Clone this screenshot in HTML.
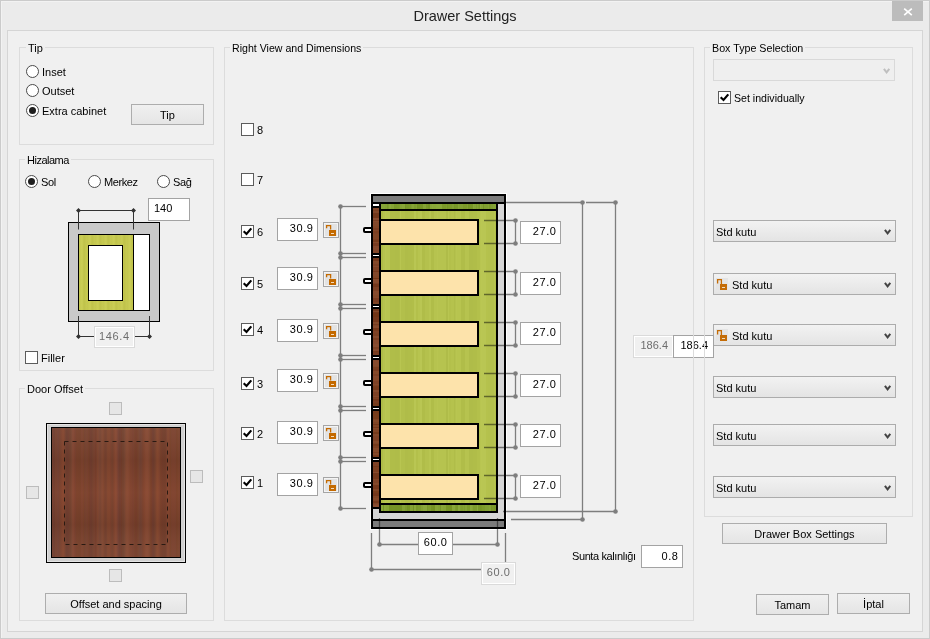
<!DOCTYPE html><html><head><meta charset="utf-8"><style>
html,body{margin:0;padding:0;}
body{width:930px;height:639px;position:relative;overflow:hidden;background:#ebebeb;font-family:"Liberation Sans",sans-serif;color:#000;}
div,svg{position:absolute;box-sizing:border-box;}
.t{white-space:nowrap;}
</style></head><body>
<div style="left:0px;top:0px;width:930px;height:639px;border:1px solid #cbcbcb;"></div>
<div style="left:1px;top:1px;width:928px;height:637px;border:1px solid #f2f2f2;border-right:none;border-bottom:none;"></div>
<div class="t" style="left:265px;width:400px;text-align:center;top:9px;font-size:14.5px;line-height:14.5px;color:#222;">Drawer Settings</div>
<div style="left:892px;top:1px;width:31px;height:20px;background:#bcbcbc;"></div>
<svg style="left:903px;top:7px" width="10" height="10" viewBox="0 0 10 10"><path d="M1.2 1.7 L8.8 8.1 M8.8 1.7 L1.2 8.1" stroke="#fff" stroke-width="1.7"/></svg>
<div style="left:7px;top:30px;width:916px;height:602px;border:1px solid #d5d5d5;background:#f0f0f0;"></div>
<div style="left:19px;top:47px;width:195px;height:98px;border:1px solid #dcdcdc;"></div>
<div class="t" style="left:26px;top:41px;height:14px;padding:0 2px;background:#f0f0f0;font-size:11px;line-height:14px;">Tip</div>
<div style="left:19px;top:159px;width:195px;height:212px;border:1px solid #dcdcdc;"></div>
<div class="t" style="left:25px;top:153px;height:14px;padding:0 2px;background:#f0f0f0;font-size:11px;line-height:14px;"><span style="letter-spacing:-0.5px">Hizalama</span></div>
<div style="left:19px;top:388px;width:195px;height:233px;border:1px solid #dcdcdc;"></div>
<div class="t" style="left:25px;top:382px;height:14px;padding:0 2px;background:#f0f0f0;font-size:11px;line-height:14px;">Door Offset</div>
<div style="left:224px;top:47px;width:470px;height:574px;border:1px solid #dcdcdc;"></div>
<div class="t" style="left:230px;top:41px;height:14px;padding:0 2px;background:#f0f0f0;font-size:10.6px;line-height:14px;">Right View and Dimensions</div>
<div style="left:704px;top:47px;width:209px;height:470px;border:1px solid #dcdcdc;"></div>
<div class="t" style="left:710px;top:41px;height:14px;padding:0 2px;background:#f0f0f0;font-size:10.7px;line-height:14px;">Box Type Selection</div>
<div style="left:26px;top:65px;width:13px;height:13px;border:1px solid #4a4a4a;border-radius:50%;background:#fff;"></div>
<div class="t" style="left:42px;top:67px;font-size:11px;line-height:11px;">Inset</div>
<div style="left:26px;top:84px;width:13px;height:13px;border:1px solid #4a4a4a;border-radius:50%;background:#fff;"></div>
<div class="t" style="left:42px;top:86px;font-size:11px;line-height:11px;">Outset</div>
<div style="left:26px;top:104px;width:13px;height:13px;border:1px solid #4a4a4a;border-radius:50%;background:#fff;"></div>
<div style="left:29px;top:107px;width:7px;height:7px;border-radius:50%;background:#1e1e1e;"></div>
<div class="t" style="left:42px;top:106px;font-size:11px;line-height:11px;">Extra cabinet</div>
<div style="left:131px;top:104px;width:73px;height:21px;border:1px solid #adadad;background:linear-gradient(#f0f0f0,#e5e5e5);"></div>
<div class="t" style="left:-32.5px;width:400px;text-align:center;top:110px;font-size:11px;line-height:11px;">Tip</div>
<div style="left:25px;top:175px;width:13px;height:13px;border:1px solid #4a4a4a;border-radius:50%;background:#fff;"></div>
<div style="left:28px;top:178px;width:7px;height:7px;border-radius:50%;background:#1e1e1e;"></div>
<div class="t" style="left:41px;top:177px;font-size:11px;line-height:11px;letter-spacing:-0.4px;">Sol</div>
<div style="left:88px;top:175px;width:13px;height:13px;border:1px solid #4a4a4a;border-radius:50%;background:#fff;"></div>
<div class="t" style="left:104px;top:177px;font-size:11px;line-height:11px;letter-spacing:-0.4px;">Merkez</div>
<div style="left:157px;top:175px;width:13px;height:13px;border:1px solid #4a4a4a;border-radius:50%;background:#fff;"></div>
<div class="t" style="left:173px;top:177px;font-size:11px;line-height:11px;letter-spacing:-0.4px;">Sağ</div>
<div style="left:68px;top:222px;width:92px;height:100px;border:1px solid #000;background:#c9c9c9;"></div>
<div style="left:78px;top:234px;width:72px;height:77px;border:1px solid #000;background:#fff;"></div>
<div style="left:79px;top:235px;width:54px;height:75px;background:repeating-linear-gradient(90deg,#c3c64e 0px,#cbce56 3px,#bfc24a 5px,#c7ca52 8px);"></div>
<div style="left:133px;top:235px;width:1px;height:75px;background:#000;"></div>
<div style="left:88px;top:245px;width:35px;height:56px;border:1px solid #000;background:#fff;"></div>
<svg style="left:60px;top:195px" width="110" height="150" viewBox="60 195 110 150"><path d="M78.5 210.5 H133.5 M78.5 210.5 V229.5 M133.5 210.5 V229.5 M78.5 336.5 H149.5 M78.5 316 V336.5 M149.5 316 V336.5" stroke="#333" stroke-width="1" fill="none"/><path d="M78.5 208 L81 210.5 L78.5 213 L76 210.5Z M133.5 208 L136 210.5 L133.5 213 L131 210.5Z M78.5 334 L81 336.5 L78.5 339 L76 336.5Z M149.5 334 L152 336.5 L149.5 339 L147 336.5Z" fill="#333"/></svg>
<div style="left:148px;top:198px;width:42px;height:23px;border:1px solid #a3a3a3;background:#fff;"></div>
<div class="t" style="left:154px;top:203px;font-size:11px;line-height:11px;">140</div>
<div style="left:94px;top:326px;width:41px;height:22px;border:1px solid #dadada;box-shadow:inset 0 0 0 1px #fff;background:#f0f0f0;"></div>
<div class="t" style="left:-170.4px;width:300px;text-align:right;top:331px;font-size:11px;line-height:11px;color:#6d6d6d;letter-spacing:0.6px;">146.4</div>
<div style="left:25px;top:351px;width:13px;height:13px;border:1px solid #5c5c5c;background:#fff;"></div>
<div class="t" style="left:41px;top:353px;font-size:11px;line-height:11px;">Filler</div>
<div style="left:46px;top:423px;width:140px;height:140px;border:1px solid #000;background:#d0d0d0;box-shadow:inset 0 0 0 1px #e4e4e4;"></div>
<svg style="left:51px;top:427px" width="130" height="131" viewBox="0 0 130 131"><rect x="0.5" y="0.5" width="129" height="130" fill="#7a422e" stroke="#000"/><defs><filter id="wb" x="0" y="0" width="1" height="1"><feGaussianBlur stdDeviation="0.8 0"/></filter><clipPath id="wc"><rect x="1" y="1" width="128" height="129"/></clipPath></defs><g clip-path="url(#wc)"><g transform="translate(1,1)" filter="url(#wb)"><rect x="0" y="0" width="1" height="130" fill="#773f2c"/><rect x="1" y="0" width="2" height="130" fill="#6c3e30"/><rect x="3" y="0" width="1" height="130" fill="#6f3a29"/><rect x="4" y="0" width="1" height="130" fill="#864830"/><rect x="5" y="0" width="2" height="130" fill="#6c3e30"/><rect x="7" y="0" width="2" height="130" fill="#7b422d"/><rect x="9" y="0" width="1" height="130" fill="#733c2a"/><rect x="10" y="0" width="2" height="130" fill="#8a4a31"/><rect x="12" y="0" width="1" height="130" fill="#7b422d"/><rect x="13" y="0" width="1" height="130" fill="#6f3a29"/><rect x="14" y="0" width="2" height="130" fill="#6c3e30"/><rect x="16" y="0" width="2" height="130" fill="#733c2a"/><rect x="18" y="0" width="1" height="130" fill="#704232"/><rect x="19" y="0" width="1" height="130" fill="#704232"/><rect x="20" y="0" width="2" height="130" fill="#8a4a31"/><rect x="22" y="0" width="1" height="130" fill="#7b422d"/><rect x="23" y="0" width="1" height="130" fill="#6f3a29"/><rect x="24" y="0" width="1" height="130" fill="#80452f"/><rect x="25" y="0" width="2" height="130" fill="#773f2c"/><rect x="27" y="0" width="2" height="130" fill="#733c2a"/><rect x="29" y="0" width="2" height="130" fill="#80452f"/><rect x="31" y="0" width="2" height="130" fill="#773f2c"/><rect x="33" y="0" width="1" height="130" fill="#704232"/><rect x="34" y="0" width="2" height="130" fill="#7b422d"/><rect x="36" y="0" width="1" height="130" fill="#733c2a"/><rect x="37" y="0" width="2" height="130" fill="#733c2a"/><rect x="39" y="0" width="2" height="130" fill="#6c3e30"/><rect x="41" y="0" width="2" height="130" fill="#7b422d"/><rect x="43" y="0" width="2" height="130" fill="#6f3a29"/><rect x="45" y="0" width="2" height="130" fill="#864830"/><rect x="47" y="0" width="2" height="130" fill="#704232"/><rect x="49" y="0" width="2" height="130" fill="#864830"/><rect x="51" y="0" width="1" height="130" fill="#7b422d"/><rect x="52" y="0" width="1" height="130" fill="#7b422d"/><rect x="53" y="0" width="1" height="130" fill="#704232"/><rect x="54" y="0" width="1" height="130" fill="#6f3a29"/><rect x="55" y="0" width="2" height="130" fill="#864830"/><rect x="57" y="0" width="3" height="130" fill="#7d432e"/><rect x="60" y="0" width="1" height="130" fill="#704232"/><rect x="61" y="0" width="1" height="130" fill="#733c2a"/><rect x="62" y="0" width="2" height="130" fill="#8a4a31"/><rect x="64" y="0" width="1" height="130" fill="#864830"/><rect x="65" y="0" width="1" height="130" fill="#7d432e"/><rect x="66" y="0" width="2" height="130" fill="#6c3e30"/><rect x="68" y="0" width="3" height="130" fill="#733c2a"/><rect x="71" y="0" width="2" height="130" fill="#704232"/><rect x="73" y="0" width="1" height="130" fill="#864830"/><rect x="74" y="0" width="3" height="130" fill="#864830"/><rect x="77" y="0" width="2" height="130" fill="#7d432e"/><rect x="79" y="0" width="2" height="130" fill="#7d432e"/><rect x="81" y="0" width="1" height="130" fill="#733c2a"/><rect x="82" y="0" width="1" height="130" fill="#7d432e"/><rect x="83" y="0" width="3" height="130" fill="#733c2a"/><rect x="86" y="0" width="1" height="130" fill="#80452f"/><rect x="87" y="0" width="3" height="130" fill="#704232"/><rect x="90" y="0" width="3" height="130" fill="#7d432e"/><rect x="93" y="0" width="1" height="130" fill="#8a4a31"/><rect x="94" y="0" width="3" height="130" fill="#864830"/><rect x="97" y="0" width="1" height="130" fill="#7d432e"/><rect x="98" y="0" width="1" height="130" fill="#773f2c"/><rect x="99" y="0" width="2" height="130" fill="#733c2a"/><rect x="101" y="0" width="2" height="130" fill="#6c3e30"/><rect x="103" y="0" width="1" height="130" fill="#80452f"/><rect x="104" y="0" width="1" height="130" fill="#7b422d"/><rect x="105" y="0" width="2" height="130" fill="#8a4a31"/><rect x="107" y="0" width="2" height="130" fill="#733c2a"/><rect x="109" y="0" width="1" height="130" fill="#7d432e"/><rect x="110" y="0" width="2" height="130" fill="#6f3a29"/><rect x="112" y="0" width="1" height="130" fill="#773f2c"/><rect x="113" y="0" width="2" height="130" fill="#6f3a29"/><rect x="115" y="0" width="1" height="130" fill="#8a4a31"/><rect x="116" y="0" width="1" height="130" fill="#8a4a31"/><rect x="117" y="0" width="1" height="130" fill="#773f2c"/><rect x="118" y="0" width="1" height="130" fill="#773f2c"/><rect x="119" y="0" width="1" height="130" fill="#7b422d"/><rect x="120" y="0" width="3" height="130" fill="#7b422d"/><rect x="123" y="0" width="1" height="130" fill="#7d432e"/><rect x="124" y="0" width="2" height="130" fill="#773f2c"/><rect x="126" y="0" width="1" height="130" fill="#80452f"/><rect x="127" y="0" width="1" height="130" fill="#773f2c"/></g><rect x="1" y="1" width="128" height="129" fill="url(#wbands)"/></g><defs><linearGradient id="wbands" x1="0" y1="0" x2="0" y2="1"><stop offset="0" stop-color="#fff" stop-opacity="0.04"/><stop offset="0.25" stop-color="#000" stop-opacity="0.05"/><stop offset="0.5" stop-color="#ff9070" stop-opacity="0.05"/><stop offset="0.75" stop-color="#000" stop-opacity="0.06"/><stop offset="1" stop-color="#fff" stop-opacity="0.03"/></linearGradient></defs><rect x="13.5" y="14.5" width="103" height="103" fill="none" stroke="#2a1a12" stroke-dasharray="4 4"/></svg>
<div style="left:109px;top:402px;width:13px;height:13px;border:1px solid #bcbcbc;background:#e6e6e6;"></div>
<div style="left:26px;top:486px;width:13px;height:13px;border:1px solid #bcbcbc;background:#e6e6e6;"></div>
<div style="left:190px;top:470px;width:13px;height:13px;border:1px solid #bcbcbc;background:#e6e6e6;"></div>
<div style="left:109px;top:569px;width:13px;height:13px;border:1px solid #bcbcbc;background:#e6e6e6;"></div>
<div style="left:45px;top:593px;width:142px;height:21px;border:1px solid #adadad;background:linear-gradient(#f0f0f0,#e5e5e5);"></div>
<div class="t" style="left:-84.0px;width:400px;text-align:center;top:599px;font-size:11px;line-height:11px;">Offset and spacing</div>
<div style="left:713px;top:59px;width:182px;height:22px;border:1px solid #d9d9d9;background:#efefef;"></div>
<svg style="left:883px;top:68px" width="8" height="7" viewBox="0 0 8 7"><path d="M0.9 0.9 L3.6 4.4 L6.3 0.9" fill="none" stroke="#bfbfbf" stroke-width="2"/></svg>
<div style="left:718px;top:91px;width:13px;height:13px;border:1px solid #5c5c5c;background:#fff;"></div>
<svg style="left:718px;top:91px" width="13" height="13" viewBox="0 0 13 13"><path d="M2.7 6.3 L5.5 9 L10.3 3.4" fill="none" stroke="#000" stroke-width="2.2"/></svg>
<div class="t" style="left:734px;top:93px;font-size:10.6px;line-height:10.6px;">Set individually</div>
<div style="left:713px;top:220px;width:183px;height:22px;border:1px solid #acacac;background:linear-gradient(#f2f2f2,#e4e4e4);"></div>
<svg style="left:884px;top:229px" width="8" height="7" viewBox="0 0 8 7"><path d="M0.9 0.9 L3.6 4.4 L6.3 0.9" fill="none" stroke="#444" stroke-width="2"/></svg>
<div class="t" style="left:716px;top:227px;font-size:11px;line-height:11px;">Std kutu</div>
<div style="left:713px;top:273px;width:183px;height:22px;border:1px solid #acacac;background:linear-gradient(#f2f2f2,#e4e4e4);"></div>
<svg style="left:884px;top:282px" width="8" height="7" viewBox="0 0 8 7"><path d="M0.9 0.9 L3.6 4.4 L6.3 0.9" fill="none" stroke="#444" stroke-width="2"/></svg>
<div style="left:716px;top:278px;width:12px;height:12px;background:#e4e4e4;"></div>
<svg style="left:716px;top:278px" width="12" height="12" viewBox="0 0 12 12"><path d="M1.6 5.5 V1.6 H5.4 V6" fill="none" stroke="#c46c06" stroke-width="1.3"/><rect x="4" y="6" width="7" height="6" fill="#c46c06"/><rect x="6" y="9" width="3" height="1" fill="#f0dcc0"/></svg>
<div class="t" style="left:732px;top:280px;font-size:11px;line-height:11px;">Std kutu</div>
<div style="left:713px;top:324px;width:183px;height:22px;border:1px solid #acacac;background:linear-gradient(#f2f2f2,#e4e4e4);"></div>
<svg style="left:884px;top:333px" width="8" height="7" viewBox="0 0 8 7"><path d="M0.9 0.9 L3.6 4.4 L6.3 0.9" fill="none" stroke="#444" stroke-width="2"/></svg>
<div style="left:716px;top:329px;width:12px;height:12px;background:#e4e4e4;"></div>
<svg style="left:716px;top:329px" width="12" height="12" viewBox="0 0 12 12"><path d="M1.6 5.5 V1.6 H5.4 V6" fill="none" stroke="#c46c06" stroke-width="1.3"/><rect x="4" y="6" width="7" height="6" fill="#c46c06"/><rect x="6" y="9" width="3" height="1" fill="#f0dcc0"/></svg>
<div class="t" style="left:732px;top:331px;font-size:11px;line-height:11px;">Std kutu</div>
<div style="left:713px;top:376px;width:183px;height:22px;border:1px solid #acacac;background:linear-gradient(#f2f2f2,#e4e4e4);"></div>
<svg style="left:884px;top:385px" width="8" height="7" viewBox="0 0 8 7"><path d="M0.9 0.9 L3.6 4.4 L6.3 0.9" fill="none" stroke="#444" stroke-width="2"/></svg>
<div class="t" style="left:716px;top:383px;font-size:11px;line-height:11px;">Std kutu</div>
<div style="left:713px;top:424px;width:183px;height:22px;border:1px solid #acacac;background:linear-gradient(#f2f2f2,#e4e4e4);"></div>
<svg style="left:884px;top:433px" width="8" height="7" viewBox="0 0 8 7"><path d="M0.9 0.9 L3.6 4.4 L6.3 0.9" fill="none" stroke="#444" stroke-width="2"/></svg>
<div class="t" style="left:716px;top:431px;font-size:11px;line-height:11px;">Std kutu</div>
<div style="left:713px;top:476px;width:183px;height:22px;border:1px solid #acacac;background:linear-gradient(#f2f2f2,#e4e4e4);"></div>
<svg style="left:884px;top:485px" width="8" height="7" viewBox="0 0 8 7"><path d="M0.9 0.9 L3.6 4.4 L6.3 0.9" fill="none" stroke="#444" stroke-width="2"/></svg>
<div class="t" style="left:716px;top:483px;font-size:11px;line-height:11px;">Std kutu</div>
<div style="left:722px;top:523px;width:165px;height:21px;border:1px solid #adadad;background:linear-gradient(#f0f0f0,#e5e5e5);"></div>
<div class="t" style="left:604.5px;width:400px;text-align:center;top:529px;font-size:11px;line-height:11px;">Drawer Box Settings</div>
<div style="left:756px;top:594px;width:73px;height:21px;border:1px solid #adadad;background:linear-gradient(#f0f0f0,#e5e5e5);"></div>
<div class="t" style="left:592.5px;width:400px;text-align:center;top:600px;font-size:11px;line-height:11px;">Tamam</div>
<div style="left:837px;top:593px;width:73px;height:21px;border:1px solid #adadad;background:linear-gradient(#f0f0f0,#e5e5e5);"></div>
<div class="t" style="left:673.5px;width:400px;text-align:center;top:599px;font-size:11px;line-height:11px;">İptal</div>
<div style="left:241px;top:123px;width:13px;height:13px;border:1px solid #5c5c5c;background:#fff;"></div>
<div class="t" style="left:257px;top:125px;font-size:11px;line-height:11px;">8</div>
<div style="left:241px;top:173px;width:13px;height:13px;border:1px solid #5c5c5c;background:#fff;"></div>
<div class="t" style="left:257px;top:175px;font-size:11px;line-height:11px;">7</div>
<div style="left:241px;top:225px;width:13px;height:13px;border:1px solid #5c5c5c;background:#fff;"></div>
<svg style="left:241px;top:225px" width="13" height="13" viewBox="0 0 13 13"><path d="M2.7 6.3 L5.5 9 L10.3 3.4" fill="none" stroke="#000" stroke-width="2.2"/></svg>
<div class="t" style="left:257px;top:227px;font-size:11px;line-height:11px;">6</div>
<div style="left:277px;top:218px;width:41px;height:23px;border:1px solid #a3a3a3;background:#fff;"></div>
<div class="t" style="left:13.600000000000023px;width:300px;text-align:right;top:223px;font-size:11px;line-height:11px;letter-spacing:0.6px;">30.9</div>
<svg style="left:323px;top:222px" width="16" height="16" viewBox="0 0 16 16"><rect x="0.5" y="0.5" width="15" height="15" fill="#e3e3e3" stroke="#a5a5a5"/><rect x="1.5" y="1.5" width="13" height="13" fill="none" stroke="#f4f4f4"/><path d="M3.6 6.2 V3.6 H7.6 V7.5" fill="none" stroke="#c46a00" stroke-width="1.3"/><rect x="6" y="8" width="7" height="6" fill="#c46a00"/><rect x="8" y="11" width="3" height="1" fill="#f3dcc0"/></svg>
<div style="left:241px;top:277px;width:13px;height:13px;border:1px solid #5c5c5c;background:#fff;"></div>
<svg style="left:241px;top:277px" width="13" height="13" viewBox="0 0 13 13"><path d="M2.7 6.3 L5.5 9 L10.3 3.4" fill="none" stroke="#000" stroke-width="2.2"/></svg>
<div class="t" style="left:257px;top:279px;font-size:11px;line-height:11px;">5</div>
<div style="left:277px;top:267px;width:41px;height:23px;border:1px solid #a3a3a3;background:#fff;"></div>
<div class="t" style="left:13.600000000000023px;width:300px;text-align:right;top:272px;font-size:11px;line-height:11px;letter-spacing:0.6px;">30.9</div>
<svg style="left:323px;top:271px" width="16" height="16" viewBox="0 0 16 16"><rect x="0.5" y="0.5" width="15" height="15" fill="#e3e3e3" stroke="#a5a5a5"/><rect x="1.5" y="1.5" width="13" height="13" fill="none" stroke="#f4f4f4"/><path d="M3.6 6.2 V3.6 H7.6 V7.5" fill="none" stroke="#c46a00" stroke-width="1.3"/><rect x="6" y="8" width="7" height="6" fill="#c46a00"/><rect x="8" y="11" width="3" height="1" fill="#f3dcc0"/></svg>
<div style="left:241px;top:323px;width:13px;height:13px;border:1px solid #5c5c5c;background:#fff;"></div>
<svg style="left:241px;top:323px" width="13" height="13" viewBox="0 0 13 13"><path d="M2.7 6.3 L5.5 9 L10.3 3.4" fill="none" stroke="#000" stroke-width="2.2"/></svg>
<div class="t" style="left:257px;top:325px;font-size:11px;line-height:11px;">4</div>
<div style="left:277px;top:319px;width:41px;height:23px;border:1px solid #a3a3a3;background:#fff;"></div>
<div class="t" style="left:13.600000000000023px;width:300px;text-align:right;top:324px;font-size:11px;line-height:11px;letter-spacing:0.6px;">30.9</div>
<svg style="left:323px;top:323px" width="16" height="16" viewBox="0 0 16 16"><rect x="0.5" y="0.5" width="15" height="15" fill="#e3e3e3" stroke="#a5a5a5"/><rect x="1.5" y="1.5" width="13" height="13" fill="none" stroke="#f4f4f4"/><path d="M3.6 6.2 V3.6 H7.6 V7.5" fill="none" stroke="#c46a00" stroke-width="1.3"/><rect x="6" y="8" width="7" height="6" fill="#c46a00"/><rect x="8" y="11" width="3" height="1" fill="#f3dcc0"/></svg>
<div style="left:241px;top:377px;width:13px;height:13px;border:1px solid #5c5c5c;background:#fff;"></div>
<svg style="left:241px;top:377px" width="13" height="13" viewBox="0 0 13 13"><path d="M2.7 6.3 L5.5 9 L10.3 3.4" fill="none" stroke="#000" stroke-width="2.2"/></svg>
<div class="t" style="left:257px;top:379px;font-size:11px;line-height:11px;">3</div>
<div style="left:277px;top:369px;width:41px;height:23px;border:1px solid #a3a3a3;background:#fff;"></div>
<div class="t" style="left:13.600000000000023px;width:300px;text-align:right;top:374px;font-size:11px;line-height:11px;letter-spacing:0.6px;">30.9</div>
<svg style="left:323px;top:373px" width="16" height="16" viewBox="0 0 16 16"><rect x="0.5" y="0.5" width="15" height="15" fill="#e3e3e3" stroke="#a5a5a5"/><rect x="1.5" y="1.5" width="13" height="13" fill="none" stroke="#f4f4f4"/><path d="M3.6 6.2 V3.6 H7.6 V7.5" fill="none" stroke="#c46a00" stroke-width="1.3"/><rect x="6" y="8" width="7" height="6" fill="#c46a00"/><rect x="8" y="11" width="3" height="1" fill="#f3dcc0"/></svg>
<div style="left:241px;top:427px;width:13px;height:13px;border:1px solid #5c5c5c;background:#fff;"></div>
<svg style="left:241px;top:427px" width="13" height="13" viewBox="0 0 13 13"><path d="M2.7 6.3 L5.5 9 L10.3 3.4" fill="none" stroke="#000" stroke-width="2.2"/></svg>
<div class="t" style="left:257px;top:429px;font-size:11px;line-height:11px;">2</div>
<div style="left:277px;top:421px;width:41px;height:23px;border:1px solid #a3a3a3;background:#fff;"></div>
<div class="t" style="left:13.600000000000023px;width:300px;text-align:right;top:426px;font-size:11px;line-height:11px;letter-spacing:0.6px;">30.9</div>
<svg style="left:323px;top:425px" width="16" height="16" viewBox="0 0 16 16"><rect x="0.5" y="0.5" width="15" height="15" fill="#e3e3e3" stroke="#a5a5a5"/><rect x="1.5" y="1.5" width="13" height="13" fill="none" stroke="#f4f4f4"/><path d="M3.6 6.2 V3.6 H7.6 V7.5" fill="none" stroke="#c46a00" stroke-width="1.3"/><rect x="6" y="8" width="7" height="6" fill="#c46a00"/><rect x="8" y="11" width="3" height="1" fill="#f3dcc0"/></svg>
<div style="left:241px;top:476px;width:13px;height:13px;border:1px solid #5c5c5c;background:#fff;"></div>
<svg style="left:241px;top:476px" width="13" height="13" viewBox="0 0 13 13"><path d="M2.7 6.3 L5.5 9 L10.3 3.4" fill="none" stroke="#000" stroke-width="2.2"/></svg>
<div class="t" style="left:257px;top:478px;font-size:11px;line-height:11px;">1</div>
<div style="left:277px;top:473px;width:41px;height:23px;border:1px solid #a3a3a3;background:#fff;"></div>
<div class="t" style="left:13.600000000000023px;width:300px;text-align:right;top:478px;font-size:11px;line-height:11px;letter-spacing:0.6px;">30.9</div>
<svg style="left:323px;top:477px" width="16" height="16" viewBox="0 0 16 16"><rect x="0.5" y="0.5" width="15" height="15" fill="#e3e3e3" stroke="#a5a5a5"/><rect x="1.5" y="1.5" width="13" height="13" fill="none" stroke="#f4f4f4"/><path d="M3.6 6.2 V3.6 H7.6 V7.5" fill="none" stroke="#c46a00" stroke-width="1.3"/><rect x="6" y="8" width="7" height="6" fill="#c46a00"/><rect x="8" y="11" width="3" height="1" fill="#f3dcc0"/></svg>
<svg style="left:0;top:0" width="930" height="639" shape-rendering="auto"><defs><pattern id="lgreen" width="23" height="10" patternUnits="userSpaceOnUse"><rect width="23" height="10" fill="#b4c14c"/><rect x="3" width="2" height="10" fill="#bccb55"/><rect x="9" width="1" height="10" fill="#aab744"/><rect x="14" width="3" height="10" fill="#b9c650"/><rect x="20" width="1" height="10" fill="#acb946"/></pattern><pattern id="dgreen" width="17" height="10" patternUnits="userSpaceOnUse"><rect width="17" height="10" fill="#82a132"/><rect x="2" width="2" height="10" fill="#739028"/><rect x="8" width="3" height="10" fill="#8aa93a"/><rect x="13" width="1" height="10" fill="#6f8c26"/></pattern><pattern id="brown" width="10" height="9" patternUnits="userSpaceOnUse"><rect width="10" height="9" fill="#7b3d1f"/><rect y="2" width="10" height="2" fill="#8a4a2a"/><rect y="6" width="10" height="1" fill="#6c331a"/></pattern></defs><rect x="370" y="193" width="137" height="337" fill="#ffffff"/><rect x="371" y="194" width="135" height="335" fill="#000"/><rect x="373" y="196" width="131" height="331" fill="#d6d6d6"/><rect x="373" y="196" width="131" height="6" fill="#7b7b7b"/><rect x="373" y="202" width="131" height="2" fill="#000"/><rect x="373" y="519" width="131" height="2" fill="#000"/><rect x="373" y="521" width="131" height="6" fill="#7b7b7b"/><rect x="379" y="202" width="119" height="311" fill="#000"/><clipPath id="clg"><rect x="381" y="204" width="115" height="307"/></clipPath><filter id="flg" x="-5%" y="-5%" width="110%" height="110%"><feGaussianBlur stdDeviation="0.7 0"/></filter><g clip-path="url(#clg)"><rect x="381" y="204" width="115" height="307" fill="#b5c24e"/><g filter="url(#flg)"><rect x="381" y="204" width="2" height="307" fill="#afbc48"/><rect x="383" y="204" width="2" height="307" fill="#b6c34f"/><rect x="385" y="204" width="1" height="307" fill="#bac753"/><rect x="386" y="204" width="2" height="307" fill="#b8c551"/><rect x="388" y="204" width="2" height="307" fill="#b8c551"/><rect x="390" y="204" width="2" height="307" fill="#b0bd49"/><rect x="392" y="204" width="3" height="307" fill="#b0bd49"/><rect x="395" y="204" width="4" height="307" fill="#afbc48"/><rect x="399" y="204" width="1" height="307" fill="#b1be4a"/><rect x="400" y="204" width="1" height="307" fill="#b8c551"/><rect x="401" y="204" width="4" height="307" fill="#b2bf4b"/><rect x="405" y="204" width="3" height="307" fill="#afbc48"/><rect x="408" y="204" width="4" height="307" fill="#b0bd49"/><rect x="412" y="204" width="2" height="307" fill="#b1be4a"/><rect x="414" y="204" width="2" height="307" fill="#b9c652"/><rect x="416" y="204" width="2" height="307" fill="#b3c04c"/><rect x="418" y="204" width="2" height="307" fill="#b7c450"/><rect x="420" y="204" width="2" height="307" fill="#b9c652"/><rect x="422" y="204" width="3" height="307" fill="#b0bd49"/><rect x="425" y="204" width="4" height="307" fill="#b4c14d"/><rect x="429" y="204" width="2" height="307" fill="#b8c551"/><rect x="431" y="204" width="3" height="307" fill="#b0bd49"/><rect x="434" y="204" width="3" height="307" fill="#b6c34f"/><rect x="437" y="204" width="1" height="307" fill="#b8c551"/><rect x="438" y="204" width="4" height="307" fill="#b6c34f"/><rect x="442" y="204" width="4" height="307" fill="#b6c34f"/><rect x="446" y="204" width="2" height="307" fill="#afbc48"/><rect x="448" y="204" width="1" height="307" fill="#b8c551"/><rect x="449" y="204" width="2" height="307" fill="#b3c04c"/><rect x="451" y="204" width="3" height="307" fill="#b5c24e"/><rect x="454" y="204" width="1" height="307" fill="#b0bd49"/><rect x="455" y="204" width="1" height="307" fill="#b4c14d"/><rect x="456" y="204" width="1" height="307" fill="#b8c551"/><rect x="457" y="204" width="4" height="307" fill="#b7c450"/><rect x="461" y="204" width="4" height="307" fill="#b0bd49"/><rect x="465" y="204" width="4" height="307" fill="#b6c34f"/><rect x="469" y="204" width="4" height="307" fill="#afbc48"/><rect x="473" y="204" width="4" height="307" fill="#b0bd49"/><rect x="477" y="204" width="3" height="307" fill="#b3c04c"/><rect x="480" y="204" width="1" height="307" fill="#b8c551"/><rect x="481" y="204" width="1" height="307" fill="#bac753"/><rect x="482" y="204" width="4" height="307" fill="#b9c652"/><rect x="486" y="204" width="2" height="307" fill="#b5c24e"/><rect x="488" y="204" width="2" height="307" fill="#b4c14d"/><rect x="490" y="204" width="4" height="307" fill="#b4c14d"/><rect x="494" y="204" width="1" height="307" fill="#b8c551"/><rect x="495" y="204" width="3" height="307" fill="#b2bf4b"/></g></g><clipPath id="cdg1"><rect x="381" y="204" width="115" height="5"/></clipPath><filter id="fdg1" x="-5%" y="-5%" width="110%" height="110%"><feGaussianBlur stdDeviation="0.7 0"/></filter><g clip-path="url(#cdg1)"><rect x="381" y="204" width="115" height="5" fill="#809e30"/><g filter="url(#fdg1)"><rect x="381" y="204" width="4" height="5" fill="#87a537"/><rect x="385" y="204" width="2" height="5" fill="#84a234"/><rect x="387" y="204" width="1" height="5" fill="#7c9a2c"/><rect x="388" y="204" width="1" height="5" fill="#809e30"/><rect x="389" y="204" width="2" height="5" fill="#8ba93b"/><rect x="391" y="204" width="1" height="5" fill="#85a335"/><rect x="392" y="204" width="1" height="5" fill="#85a335"/><rect x="393" y="204" width="1" height="5" fill="#86a436"/><rect x="394" y="204" width="1" height="5" fill="#799729"/><rect x="395" y="204" width="2" height="5" fill="#7a982a"/><rect x="397" y="204" width="2" height="5" fill="#7c9a2c"/><rect x="399" y="204" width="1" height="5" fill="#7f9d2f"/><rect x="400" y="204" width="2" height="5" fill="#84a234"/><rect x="402" y="204" width="3" height="5" fill="#88a638"/><rect x="405" y="204" width="1" height="5" fill="#759325"/><rect x="406" y="204" width="3" height="5" fill="#799729"/><rect x="409" y="204" width="1" height="5" fill="#7c9a2c"/><rect x="410" y="204" width="1" height="5" fill="#7a982a"/><rect x="411" y="204" width="1" height="5" fill="#809e30"/><rect x="412" y="204" width="2" height="5" fill="#86a436"/><rect x="414" y="204" width="2" height="5" fill="#7e9c2e"/><rect x="416" y="204" width="1" height="5" fill="#83a133"/><rect x="417" y="204" width="1" height="5" fill="#749224"/><rect x="418" y="204" width="2" height="5" fill="#759325"/><rect x="420" y="204" width="3" height="5" fill="#779527"/><rect x="423" y="204" width="3" height="5" fill="#85a335"/><rect x="426" y="204" width="2" height="5" fill="#7b992b"/><rect x="428" y="204" width="2" height="5" fill="#769426"/><rect x="430" y="204" width="2" height="5" fill="#87a537"/><rect x="432" y="204" width="1" height="5" fill="#8ba93b"/><rect x="433" y="204" width="3" height="5" fill="#89a739"/><rect x="436" y="204" width="4" height="5" fill="#8ba93b"/><rect x="440" y="204" width="2" height="5" fill="#89a739"/><rect x="442" y="204" width="4" height="5" fill="#7b992b"/><rect x="446" y="204" width="1" height="5" fill="#7f9d2f"/><rect x="447" y="204" width="1" height="5" fill="#779527"/><rect x="448" y="204" width="4" height="5" fill="#7b992b"/><rect x="452" y="204" width="2" height="5" fill="#809e30"/><rect x="454" y="204" width="1" height="5" fill="#779527"/><rect x="455" y="204" width="3" height="5" fill="#799729"/><rect x="458" y="204" width="1" height="5" fill="#86a436"/><rect x="459" y="204" width="4" height="5" fill="#819f31"/><rect x="463" y="204" width="4" height="5" fill="#7b992b"/><rect x="467" y="204" width="1" height="5" fill="#819f31"/><rect x="468" y="204" width="1" height="5" fill="#759325"/><rect x="469" y="204" width="4" height="5" fill="#779527"/><rect x="473" y="204" width="1" height="5" fill="#88a638"/><rect x="474" y="204" width="2" height="5" fill="#84a234"/><rect x="476" y="204" width="1" height="5" fill="#7d9b2d"/><rect x="477" y="204" width="1" height="5" fill="#85a335"/><rect x="478" y="204" width="1" height="5" fill="#7f9d2f"/><rect x="479" y="204" width="1" height="5" fill="#799729"/><rect x="480" y="204" width="1" height="5" fill="#8ba93b"/><rect x="481" y="204" width="2" height="5" fill="#84a234"/><rect x="483" y="204" width="1" height="5" fill="#779527"/><rect x="484" y="204" width="4" height="5" fill="#819f31"/><rect x="488" y="204" width="1" height="5" fill="#86a436"/><rect x="489" y="204" width="2" height="5" fill="#7c9a2c"/><rect x="491" y="204" width="2" height="5" fill="#809e30"/><rect x="493" y="204" width="2" height="5" fill="#85a335"/><rect x="495" y="204" width="4" height="5" fill="#87a537"/></g></g><rect x="381" y="209" width="115" height="2" fill="#000"/><rect x="381" y="503" width="115" height="2" fill="#000"/><clipPath id="cdg2"><rect x="381" y="505" width="115" height="6"/></clipPath><filter id="fdg2" x="-5%" y="-5%" width="110%" height="110%"><feGaussianBlur stdDeviation="0.7 0"/></filter><g clip-path="url(#cdg2)"><rect x="381" y="505" width="115" height="6" fill="#809e30"/><g filter="url(#fdg2)"><rect x="381" y="505" width="2" height="6" fill="#8aa83a"/><rect x="383" y="505" width="1" height="6" fill="#769426"/><rect x="384" y="505" width="2" height="6" fill="#89a739"/><rect x="386" y="505" width="3" height="6" fill="#85a335"/><rect x="389" y="505" width="3" height="6" fill="#759325"/><rect x="392" y="505" width="1" height="6" fill="#769426"/><rect x="393" y="505" width="2" height="6" fill="#769426"/><rect x="395" y="505" width="4" height="6" fill="#759325"/><rect x="399" y="505" width="3" height="6" fill="#759325"/><rect x="402" y="505" width="3" height="6" fill="#84a234"/><rect x="405" y="505" width="2" height="6" fill="#7d9b2d"/><rect x="407" y="505" width="1" height="6" fill="#759325"/><rect x="408" y="505" width="2" height="6" fill="#779527"/><rect x="410" y="505" width="3" height="6" fill="#85a335"/><rect x="413" y="505" width="1" height="6" fill="#759325"/><rect x="414" y="505" width="2" height="6" fill="#89a739"/><rect x="416" y="505" width="1" height="6" fill="#7a982a"/><rect x="417" y="505" width="1" height="6" fill="#7a982a"/><rect x="418" y="505" width="3" height="6" fill="#7d9b2d"/><rect x="421" y="505" width="2" height="6" fill="#85a335"/><rect x="423" y="505" width="4" height="6" fill="#8aa83a"/><rect x="427" y="505" width="1" height="6" fill="#7a982a"/><rect x="428" y="505" width="3" height="6" fill="#7f9d2f"/><rect x="431" y="505" width="2" height="6" fill="#769426"/><rect x="433" y="505" width="2" height="6" fill="#749224"/><rect x="435" y="505" width="3" height="6" fill="#86a436"/><rect x="438" y="505" width="2" height="6" fill="#82a032"/><rect x="440" y="505" width="1" height="6" fill="#799729"/><rect x="441" y="505" width="2" height="6" fill="#89a739"/><rect x="443" y="505" width="3" height="6" fill="#86a436"/><rect x="446" y="505" width="4" height="6" fill="#789628"/><rect x="450" y="505" width="2" height="6" fill="#749224"/><rect x="452" y="505" width="3" height="6" fill="#88a638"/><rect x="455" y="505" width="1" height="6" fill="#7e9c2e"/><rect x="456" y="505" width="2" height="6" fill="#7a982a"/><rect x="458" y="505" width="2" height="6" fill="#8aa83a"/><rect x="460" y="505" width="1" height="6" fill="#819f31"/><rect x="461" y="505" width="2" height="6" fill="#7f9d2f"/><rect x="463" y="505" width="1" height="6" fill="#83a133"/><rect x="464" y="505" width="1" height="6" fill="#7e9c2e"/><rect x="465" y="505" width="2" height="6" fill="#85a335"/><rect x="467" y="505" width="3" height="6" fill="#7c9a2c"/><rect x="470" y="505" width="2" height="6" fill="#8aa83a"/><rect x="472" y="505" width="1" height="6" fill="#86a436"/><rect x="473" y="505" width="2" height="6" fill="#7d9b2d"/><rect x="475" y="505" width="2" height="6" fill="#7e9c2e"/><rect x="477" y="505" width="1" height="6" fill="#8aa83a"/><rect x="478" y="505" width="2" height="6" fill="#799729"/><rect x="480" y="505" width="1" height="6" fill="#769426"/><rect x="481" y="505" width="1" height="6" fill="#789628"/><rect x="482" y="505" width="3" height="6" fill="#7c9a2c"/><rect x="485" y="505" width="4" height="6" fill="#809e30"/><rect x="489" y="505" width="2" height="6" fill="#85a335"/><rect x="491" y="505" width="1" height="6" fill="#789628"/><rect x="492" y="505" width="2" height="6" fill="#7b992b"/><rect x="494" y="505" width="1" height="6" fill="#789628"/><rect x="495" y="505" width="2" height="6" fill="#799729"/></g></g><rect x="373" y="204" width="6" height="2" fill="#fff"/><rect x="373" y="206" width="6" height="2" fill="#000"/><clipPath id="cbr"><rect x="373" y="208" width="6" height="299"/></clipPath><filter id="fbr" x="-5%" y="-5%" width="110%" height="110%"><feGaussianBlur stdDeviation="0 0.7"/></filter><g clip-path="url(#cbr)"><rect x="373" y="208" width="6" height="299" fill="#7e4225"/><g filter="url(#fbr)"><rect x="373" y="208" width="6" height="2" fill="#824629"/><rect x="373" y="210" width="6" height="1" fill="#7c4023"/><rect x="373" y="211" width="6" height="2" fill="#824629"/><rect x="373" y="213" width="6" height="4" fill="#73371a"/><rect x="373" y="217" width="6" height="1" fill="#75391c"/><rect x="373" y="218" width="6" height="2" fill="#894d30"/><rect x="373" y="220" width="6" height="1" fill="#793d20"/><rect x="373" y="221" width="6" height="1" fill="#874b2e"/><rect x="373" y="222" width="6" height="4" fill="#83472a"/><rect x="373" y="226" width="6" height="2" fill="#814528"/><rect x="373" y="228" width="6" height="2" fill="#7a3e21"/><rect x="373" y="230" width="6" height="1" fill="#824629"/><rect x="373" y="231" width="6" height="2" fill="#7c4023"/><rect x="373" y="233" width="6" height="1" fill="#7e4225"/><rect x="373" y="234" width="6" height="4" fill="#804427"/><rect x="373" y="238" width="6" height="1" fill="#814528"/><rect x="373" y="239" width="6" height="1" fill="#7d4124"/><rect x="373" y="240" width="6" height="2" fill="#763a1d"/><rect x="373" y="242" width="6" height="1" fill="#85492c"/><rect x="373" y="243" width="6" height="3" fill="#7a3e21"/><rect x="373" y="246" width="6" height="2" fill="#864a2d"/><rect x="373" y="248" width="6" height="1" fill="#874b2e"/><rect x="373" y="249" width="6" height="1" fill="#864a2d"/><rect x="373" y="250" width="6" height="4" fill="#83472a"/><rect x="373" y="254" width="6" height="2" fill="#7a3e21"/><rect x="373" y="256" width="6" height="1" fill="#75391c"/><rect x="373" y="257" width="6" height="4" fill="#74381b"/><rect x="373" y="261" width="6" height="2" fill="#84482b"/><rect x="373" y="263" width="6" height="1" fill="#83472a"/><rect x="373" y="264" width="6" height="2" fill="#7e4225"/><rect x="373" y="266" width="6" height="1" fill="#864a2d"/><rect x="373" y="267" width="6" height="4" fill="#7e4225"/><rect x="373" y="271" width="6" height="1" fill="#74381b"/><rect x="373" y="272" width="6" height="4" fill="#824629"/><rect x="373" y="276" width="6" height="2" fill="#814528"/><rect x="373" y="278" width="6" height="1" fill="#723619"/><rect x="373" y="279" width="6" height="4" fill="#874b2e"/><rect x="373" y="283" width="6" height="1" fill="#7f4326"/><rect x="373" y="284" width="6" height="3" fill="#74381b"/><rect x="373" y="287" width="6" height="4" fill="#7e4225"/><rect x="373" y="291" width="6" height="4" fill="#874b2e"/><rect x="373" y="295" width="6" height="2" fill="#84482b"/><rect x="373" y="297" width="6" height="1" fill="#864a2d"/><rect x="373" y="298" width="6" height="4" fill="#7a3e21"/><rect x="373" y="302" width="6" height="4" fill="#804427"/><rect x="373" y="306" width="6" height="3" fill="#793d20"/><rect x="373" y="309" width="6" height="2" fill="#73371a"/><rect x="373" y="311" width="6" height="1" fill="#84482b"/><rect x="373" y="312" width="6" height="1" fill="#74381b"/><rect x="373" y="313" width="6" height="4" fill="#723619"/><rect x="373" y="317" width="6" height="2" fill="#74381b"/><rect x="373" y="319" width="6" height="3" fill="#74381b"/><rect x="373" y="322" width="6" height="2" fill="#84482b"/><rect x="373" y="324" width="6" height="1" fill="#793d20"/><rect x="373" y="325" width="6" height="1" fill="#824629"/><rect x="373" y="326" width="6" height="2" fill="#874b2e"/><rect x="373" y="328" width="6" height="1" fill="#74381b"/><rect x="373" y="329" width="6" height="2" fill="#773b1e"/><rect x="373" y="331" width="6" height="2" fill="#7f4326"/><rect x="373" y="333" width="6" height="3" fill="#7b3f22"/><rect x="373" y="336" width="6" height="2" fill="#874b2e"/><rect x="373" y="338" width="6" height="2" fill="#7d4124"/><rect x="373" y="340" width="6" height="4" fill="#864a2d"/><rect x="373" y="344" width="6" height="3" fill="#894d30"/><rect x="373" y="347" width="6" height="2" fill="#7e4225"/><rect x="373" y="349" width="6" height="2" fill="#864a2d"/><rect x="373" y="351" width="6" height="1" fill="#763a1d"/><rect x="373" y="352" width="6" height="4" fill="#793d20"/><rect x="373" y="356" width="6" height="1" fill="#763a1d"/><rect x="373" y="357" width="6" height="4" fill="#864a2d"/><rect x="373" y="361" width="6" height="2" fill="#884c2f"/><rect x="373" y="363" width="6" height="3" fill="#874b2e"/><rect x="373" y="366" width="6" height="1" fill="#84482b"/><rect x="373" y="367" width="6" height="2" fill="#7b3f22"/><rect x="373" y="369" width="6" height="2" fill="#7a3e21"/><rect x="373" y="371" width="6" height="3" fill="#85492c"/><rect x="373" y="374" width="6" height="2" fill="#7f4326"/><rect x="373" y="376" width="6" height="2" fill="#864a2d"/><rect x="373" y="378" width="6" height="3" fill="#85492c"/><rect x="373" y="381" width="6" height="3" fill="#7e4225"/><rect x="373" y="384" width="6" height="1" fill="#85492c"/><rect x="373" y="385" width="6" height="1" fill="#7f4326"/><rect x="373" y="386" width="6" height="1" fill="#783c1f"/><rect x="373" y="387" width="6" height="1" fill="#773b1e"/><rect x="373" y="388" width="6" height="2" fill="#763a1d"/><rect x="373" y="390" width="6" height="2" fill="#874b2e"/><rect x="373" y="392" width="6" height="4" fill="#7f4326"/><rect x="373" y="396" width="6" height="1" fill="#864a2d"/><rect x="373" y="397" width="6" height="1" fill="#7d4124"/><rect x="373" y="398" width="6" height="1" fill="#7e4225"/><rect x="373" y="399" width="6" height="2" fill="#75391c"/><rect x="373" y="401" width="6" height="2" fill="#7a3e21"/><rect x="373" y="403" width="6" height="4" fill="#763a1d"/><rect x="373" y="407" width="6" height="1" fill="#7f4326"/><rect x="373" y="408" width="6" height="2" fill="#884c2f"/><rect x="373" y="410" width="6" height="1" fill="#7e4225"/><rect x="373" y="411" width="6" height="2" fill="#763a1d"/><rect x="373" y="413" width="6" height="2" fill="#783c1f"/><rect x="373" y="415" width="6" height="4" fill="#783c1f"/><rect x="373" y="419" width="6" height="1" fill="#804427"/><rect x="373" y="420" width="6" height="2" fill="#85492c"/><rect x="373" y="422" width="6" height="2" fill="#804427"/><rect x="373" y="424" width="6" height="1" fill="#74381b"/><rect x="373" y="425" width="6" height="2" fill="#814528"/><rect x="373" y="427" width="6" height="1" fill="#74381b"/><rect x="373" y="428" width="6" height="1" fill="#85492c"/><rect x="373" y="429" width="6" height="2" fill="#814528"/><rect x="373" y="431" width="6" height="1" fill="#814528"/><rect x="373" y="432" width="6" height="2" fill="#763a1d"/><rect x="373" y="434" width="6" height="2" fill="#824629"/><rect x="373" y="436" width="6" height="4" fill="#7f4326"/><rect x="373" y="440" width="6" height="1" fill="#7c4023"/><rect x="373" y="441" width="6" height="2" fill="#84482b"/><rect x="373" y="443" width="6" height="1" fill="#804427"/><rect x="373" y="444" width="6" height="2" fill="#763a1d"/><rect x="373" y="446" width="6" height="2" fill="#7d4124"/><rect x="373" y="448" width="6" height="4" fill="#84482b"/><rect x="373" y="452" width="6" height="1" fill="#7d4124"/><rect x="373" y="453" width="6" height="2" fill="#84482b"/><rect x="373" y="455" width="6" height="1" fill="#793d20"/><rect x="373" y="456" width="6" height="2" fill="#773b1e"/><rect x="373" y="458" width="6" height="4" fill="#783c1f"/><rect x="373" y="462" width="6" height="4" fill="#7f4326"/><rect x="373" y="466" width="6" height="1" fill="#773b1e"/><rect x="373" y="467" width="6" height="4" fill="#7d4124"/><rect x="373" y="471" width="6" height="1" fill="#7d4124"/><rect x="373" y="472" width="6" height="1" fill="#874b2e"/><rect x="373" y="473" width="6" height="4" fill="#73371a"/><rect x="373" y="477" width="6" height="2" fill="#74381b"/><rect x="373" y="479" width="6" height="1" fill="#814528"/><rect x="373" y="480" width="6" height="3" fill="#7e4225"/><rect x="373" y="483" width="6" height="1" fill="#85492c"/><rect x="373" y="484" width="6" height="1" fill="#83472a"/><rect x="373" y="485" width="6" height="4" fill="#74381b"/><rect x="373" y="489" width="6" height="2" fill="#814528"/><rect x="373" y="491" width="6" height="2" fill="#783c1f"/><rect x="373" y="493" width="6" height="2" fill="#74381b"/><rect x="373" y="495" width="6" height="1" fill="#75391c"/><rect x="373" y="496" width="6" height="2" fill="#814528"/><rect x="373" y="498" width="6" height="2" fill="#85492c"/><rect x="373" y="500" width="6" height="1" fill="#7e4225"/><rect x="373" y="501" width="6" height="2" fill="#75391c"/><rect x="373" y="503" width="6" height="1" fill="#804427"/><rect x="373" y="504" width="6" height="1" fill="#864a2d"/><rect x="373" y="505" width="6" height="4" fill="#894d30"/></g></g><rect x="373" y="253" width="6" height="2" fill="#000"/><rect x="373" y="255" width="6" height="1" fill="#fff"/><rect x="373" y="256" width="6" height="2" fill="#000"/><rect x="373" y="304" width="6" height="2" fill="#000"/><rect x="373" y="306" width="6" height="1" fill="#fff"/><rect x="373" y="307" width="6" height="2" fill="#000"/><rect x="373" y="355" width="6" height="2" fill="#000"/><rect x="373" y="357" width="6" height="1" fill="#fff"/><rect x="373" y="358" width="6" height="2" fill="#000"/><rect x="373" y="406" width="6" height="2" fill="#000"/><rect x="373" y="408" width="6" height="1" fill="#fff"/><rect x="373" y="409" width="6" height="2" fill="#000"/><rect x="373" y="457" width="6" height="2" fill="#000"/><rect x="373" y="459" width="6" height="1" fill="#fff"/><rect x="373" y="460" width="6" height="2" fill="#000"/><rect x="373" y="507" width="6" height="2" fill="#000"/><rect x="379" y="219" width="100" height="26" fill="#000"/><rect x="381" y="221" width="96" height="22" fill="#fde3ab"/><path d="M371 227 H365 Q363 227 363 229 V231 Q363 233 365 233 H371Z" fill="#000"/><rect x="365" y="229" width="6" height="2" fill="#fff"/><rect x="379" y="270" width="100" height="26" fill="#000"/><rect x="381" y="272" width="96" height="22" fill="#fde3ab"/><path d="M371 278 H365 Q363 278 363 280 V282 Q363 284 365 284 H371Z" fill="#000"/><rect x="365" y="280" width="6" height="2" fill="#fff"/><rect x="379" y="321" width="100" height="26" fill="#000"/><rect x="381" y="323" width="96" height="22" fill="#fde3ab"/><path d="M371 329 H365 Q363 329 363 331 V333 Q363 335 365 335 H371Z" fill="#000"/><rect x="365" y="331" width="6" height="2" fill="#fff"/><rect x="379" y="372" width="100" height="26" fill="#000"/><rect x="381" y="374" width="96" height="22" fill="#fde3ab"/><path d="M371 380 H365 Q363 380 363 382 V384 Q363 386 365 386 H371Z" fill="#000"/><rect x="365" y="382" width="6" height="2" fill="#fff"/><rect x="379" y="423" width="100" height="26" fill="#000"/><rect x="381" y="425" width="96" height="22" fill="#fde3ab"/><path d="M371 431 H365 Q363 431 363 433 V435 Q363 437 365 437 H371Z" fill="#000"/><rect x="365" y="433" width="6" height="2" fill="#fff"/><rect x="379" y="474" width="100" height="26" fill="#000"/><rect x="381" y="476" width="96" height="22" fill="#fde3ab"/><path d="M371 482 H365 Q363 482 363 484 V486 Q363 488 365 488 H371Z" fill="#000"/><rect x="365" y="484" width="6" height="2" fill="#fff"/><g style="mix-blend-mode:multiply"><path d="M340.5 206 V508.5" stroke="#868686" stroke-width="1.3" fill="none"/><path d="M340.5 206.5 H366" stroke="#868686" stroke-width="1.3" fill="none"/><circle cx="340.5" cy="206.5" r="2.3" fill="#868686"/><path d="M340.5 253.5 H366" stroke="#868686" stroke-width="1.3" fill="none"/><circle cx="340.5" cy="253.5" r="2.3" fill="#868686"/><path d="M340.5 257.5 H366" stroke="#868686" stroke-width="1.3" fill="none"/><circle cx="340.5" cy="257.5" r="2.3" fill="#868686"/><path d="M340.5 304.5 H366" stroke="#868686" stroke-width="1.3" fill="none"/><circle cx="340.5" cy="304.5" r="2.3" fill="#868686"/><path d="M340.5 308.5 H366" stroke="#868686" stroke-width="1.3" fill="none"/><circle cx="340.5" cy="308.5" r="2.3" fill="#868686"/><path d="M340.5 355.5 H366" stroke="#868686" stroke-width="1.3" fill="none"/><circle cx="340.5" cy="355.5" r="2.3" fill="#868686"/><path d="M340.5 359.5 H366" stroke="#868686" stroke-width="1.3" fill="none"/><circle cx="340.5" cy="359.5" r="2.3" fill="#868686"/><path d="M340.5 406.5 H366" stroke="#868686" stroke-width="1.3" fill="none"/><circle cx="340.5" cy="406.5" r="2.3" fill="#868686"/><path d="M340.5 410.5 H366" stroke="#868686" stroke-width="1.3" fill="none"/><circle cx="340.5" cy="410.5" r="2.3" fill="#868686"/><path d="M340.5 457.5 H366" stroke="#868686" stroke-width="1.3" fill="none"/><circle cx="340.5" cy="457.5" r="2.3" fill="#868686"/><path d="M340.5 461.5 H366" stroke="#868686" stroke-width="1.3" fill="none"/><circle cx="340.5" cy="461.5" r="2.3" fill="#868686"/><path d="M340.5 508.5 H366" stroke="#868686" stroke-width="1.3" fill="none"/><circle cx="340.5" cy="508.5" r="2.3" fill="#868686"/><path d="M484 220.5 H515.5 V243.5 H484" stroke="#868686" stroke-width="1.3" fill="none"/><circle cx="515.5" cy="220.5" r="2.3" fill="#868686"/><circle cx="515.5" cy="243.5" r="2.3" fill="#868686"/><path d="M484 271.5 H515.5 V294.5 H484" stroke="#868686" stroke-width="1.3" fill="none"/><circle cx="515.5" cy="271.5" r="2.3" fill="#868686"/><circle cx="515.5" cy="294.5" r="2.3" fill="#868686"/><path d="M484 322.5 H515.5 V345.5 H484" stroke="#868686" stroke-width="1.3" fill="none"/><circle cx="515.5" cy="322.5" r="2.3" fill="#868686"/><circle cx="515.5" cy="345.5" r="2.3" fill="#868686"/><path d="M484 373.5 H515.5 V396.5 H484" stroke="#868686" stroke-width="1.3" fill="none"/><circle cx="515.5" cy="373.5" r="2.3" fill="#868686"/><circle cx="515.5" cy="396.5" r="2.3" fill="#868686"/><path d="M484 424.5 H515.5 V447.5 H484" stroke="#868686" stroke-width="1.3" fill="none"/><circle cx="515.5" cy="424.5" r="2.3" fill="#868686"/><circle cx="515.5" cy="447.5" r="2.3" fill="#868686"/><path d="M484 475.5 H515.5 V498.5 H484" stroke="#868686" stroke-width="1.3" fill="none"/><circle cx="515.5" cy="475.5" r="2.3" fill="#868686"/><circle cx="515.5" cy="498.5" r="2.3" fill="#868686"/><path d="M586 202.5 H615.5 V511.5 H503" stroke="#868686" stroke-width="1.3" fill="none"/><path d="M506 202.5 H582.5 V519.5 H511" stroke="#868686" stroke-width="1.3" fill="none"/><circle cx="582.5" cy="202.5" r="2.3" fill="#868686"/><circle cx="615.5" cy="202.5" r="2.3" fill="#868686"/><circle cx="615.5" cy="511.5" r="2.3" fill="#868686"/><circle cx="582.5" cy="519.5" r="2.3" fill="#868686"/><path d="M379.5 518 V544.5 H497.5 V518" stroke="#868686" stroke-width="1.3" fill="none"/><circle cx="379.5" cy="544.5" r="2.3" fill="#868686"/><circle cx="497.5" cy="544.5" r="2.3" fill="#868686"/><path d="M371.5 533 V569.5 H481 M505.5 533 V563" stroke="#868686" stroke-width="1.3" fill="none"/><circle cx="371.5" cy="569.5" r="2.3" fill="#868686"/></g></svg>
<div style="left:520px;top:221px;width:41px;height:23px;border:1px solid #a3a3a3;background:#fff;"></div>
<div class="t" style="left:256.6px;width:300px;text-align:right;top:226px;font-size:11px;line-height:11px;letter-spacing:0.6px;">27.0</div>
<div style="left:520px;top:272px;width:41px;height:23px;border:1px solid #a3a3a3;background:#fff;"></div>
<div class="t" style="left:256.6px;width:300px;text-align:right;top:277px;font-size:11px;line-height:11px;letter-spacing:0.6px;">27.0</div>
<div style="left:520px;top:322px;width:41px;height:23px;border:1px solid #a3a3a3;background:#fff;"></div>
<div class="t" style="left:256.6px;width:300px;text-align:right;top:327px;font-size:11px;line-height:11px;letter-spacing:0.6px;">27.0</div>
<div style="left:520px;top:374px;width:41px;height:23px;border:1px solid #a3a3a3;background:#fff;"></div>
<div class="t" style="left:256.6px;width:300px;text-align:right;top:379px;font-size:11px;line-height:11px;letter-spacing:0.6px;">27.0</div>
<div style="left:520px;top:424px;width:41px;height:23px;border:1px solid #a3a3a3;background:#fff;"></div>
<div class="t" style="left:256.6px;width:300px;text-align:right;top:429px;font-size:11px;line-height:11px;letter-spacing:0.6px;">27.0</div>
<div style="left:520px;top:475px;width:41px;height:23px;border:1px solid #a3a3a3;background:#fff;"></div>
<div class="t" style="left:256.6px;width:300px;text-align:right;top:480px;font-size:11px;line-height:11px;letter-spacing:0.6px;">27.0</div>
<div style="left:418px;top:532px;width:35px;height:23px;border:1px solid #a3a3a3;background:#fff;"></div>
<div class="t" style="left:147.60000000000002px;width:300px;text-align:right;top:537px;font-size:11px;line-height:11px;letter-spacing:0.6px;">60.0</div>
<div style="left:481px;top:562px;width:35px;height:23px;border:1px solid #dadada;box-shadow:inset 0 0 0 1px #fff;background:#f0f0f0;"></div>
<div class="t" style="left:210.60000000000002px;width:300px;text-align:right;top:567px;font-size:11px;line-height:11px;color:#6d6d6d;letter-spacing:0.6px;">60.0</div>
<div class="t" style="left:572px;top:551px;font-size:11px;line-height:11px;letter-spacing:-0.4px;">Sunta kalınlığı</div>
<div style="left:641px;top:545px;width:42px;height:23px;border:1px solid #a3a3a3;background:#fff;"></div>
<div class="t" style="left:378.6px;width:300px;text-align:right;top:551px;font-size:11px;line-height:11px;letter-spacing:0.6px;">0.8</div>
<div style="left:633px;top:335px;width:41px;height:23px;border:1px solid #dadada;box-shadow:inset 0 0 0 1px #fff;background:#f0f0f0;"></div>
<div class="t" style="left:368px;width:300px;text-align:right;top:340px;font-size:11px;line-height:11px;color:#6d6d6d;letter-spacing:0px;">186.4</div>
<div style="left:673px;top:335px;width:41px;height:23px;border:1px solid #a3a3a3;background:#fff;"></div>
<div class="t" style="left:408px;width:300px;text-align:right;top:340px;font-size:11px;line-height:11px;letter-spacing:0px;">186.4</div>
<div style="left:693px;top:335px;width:1px;height:23px;background:#dcdcdc;"></div>
<div style="left:704px;top:335px;width:1px;height:23px;background:#dcdcdc;"></div>
</body></html>
